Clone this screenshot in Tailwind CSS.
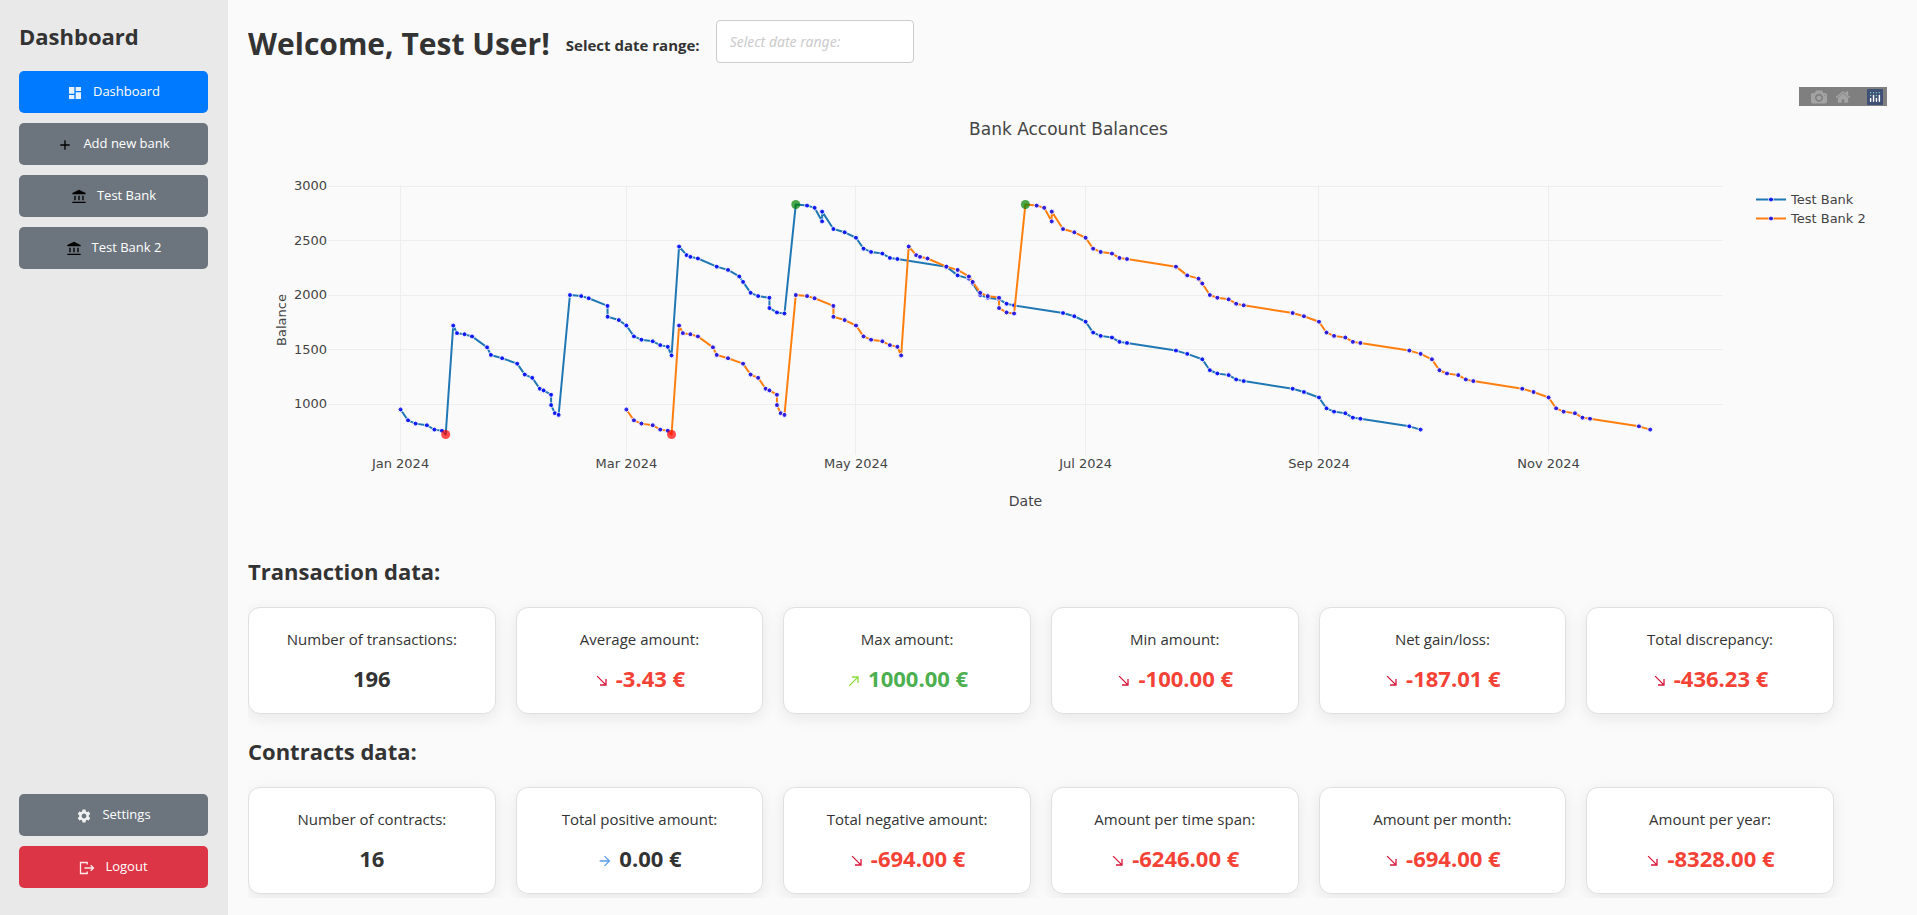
<!DOCTYPE html>
<html lang="en">
<head>
<meta charset="utf-8">
<meta name="viewport" content="width=device-width, initial-scale=1">
<title>Dashboard</title>
<script src="https://cdn.jsdelivr.net/npm/@tailwindcss/browser@4"></script>
</head>
<body class="bg-[#fafafa] text-[#333] font-['Open_Sans','Noto_Sans',sans-serif]">

<svg class="hidden" aria-hidden="true">
  <symbol id="i-bank" viewBox="0 -960 960 960"><path d="M200-280v-280h80v280h-80Zm240 0v-280h80v280h-80ZM80-120v-80h800v80H80Zm600-160v-280h80v280h-80ZM80-640v-80l400-200 400 200v80H80Z"/></symbol>
  <symbol id="i-down" viewBox="0 0 24 24"><path d="M19 9h-2v6.59L5.41 4 4 5.41 15.59 17H9v2h10z"/></symbol>
  <symbol id="i-up" viewBox="0 0 24 24"><path d="M9 5v2h6.59L4 18.59 5.41 20 17 8.41V15h2V5z"/></symbol>
  <symbol id="i-flat" viewBox="0 0 24 24"><path d="M12 4l-1.41 1.41L16.17 11H4v2h12.17l-5.58 5.59L12 20l8-8z"/></symbol>
</svg>

<div class="flex min-h-screen">
  <aside class="flex w-[228px] shrink-0 flex-col bg-[#e9e9e9] pt-5 pr-5 pb-[27px] pl-[19px]">
    <h2 class="text-[22px] leading-8 font-bold">Dashboard</h2>
    <nav class="mt-[19px] flex flex-col gap-[10px] text-[13px] text-white">
      <button type="button" class="flex h-[42px] items-center justify-center gap-[10px] rounded-[5px] bg-[#007bff]">
        <svg class="mt-0.5 size-4 fill-white/90" viewBox="0 0 24 24"><path d="M3 13h8V3H3v10zm0 8h8v-6H3v6zm10 0h8V11h-8v10zm0-18v6h8V3h-8z"/></svg>Dashboard
      </button>
      <button type="button" class="flex h-[42px] items-center justify-center gap-[10px] rounded-[5px] bg-[#6c757d]">
        <svg class="mt-0.5 size-4 fill-black" viewBox="0 0 24 24"><path d="M19 13h-6v6h-2v-6H5v-2h6V5h2v6h6v2z"/></svg>Add new bank
      </button>
      <button type="button" class="flex h-[42px] items-center justify-center gap-[10px] rounded-[5px] bg-[#6c757d]">
        <svg class="mt-0.5 size-4 fill-black"><use href="#i-bank"/></svg>Test Bank
      </button>
      <button type="button" class="flex h-[42px] items-center justify-center gap-[10px] rounded-[5px] bg-[#6c757d]">
        <svg class="mt-0.5 size-4 fill-black"><use href="#i-bank"/></svg>Test Bank 2
      </button>
    </nav>
    <div class="mt-auto flex flex-col gap-[10px] text-[13px] text-white">
      <button type="button" class="flex h-[42px] items-center justify-center gap-[10px] rounded-[5px] bg-[#6c757d]">
        <svg class="mt-0.5 size-4 fill-white/90" viewBox="0 0 24 24"><path d="M19.14 12.94c.04-.3.06-.61.06-.94 0-.32-.02-.64-.07-.94l2.03-1.58c.18-.14.23-.41.12-.61l-1.92-3.32c-.12-.22-.37-.29-.59-.22l-2.39.96c-.5-.38-1.03-.7-1.62-.94l-.36-2.54c-.04-.24-.24-.41-.48-.41h-3.84c-.24 0-.43.17-.47.41l-.36 2.54c-.59.24-1.13.57-1.62.94l-2.39-.96c-.22-.08-.47 0-.59.22L2.74 8.87c-.12.21-.08.47.12.61l2.03 1.58c-.05.3-.09.63-.09.94s.02.64.07.94l-2.03 1.58c-.18.14-.23.41-.12.61l1.92 3.32c.12.22.37.29.59.22l2.39-.96c.5.38 1.03.7 1.62.94l.36 2.54c.05.24.24.41.48.41h3.84c.24 0 .44-.17.47-.41l.36-2.54c.59-.24 1.13-.56 1.62-.94l2.39.96c.22.08.47 0 .59-.22l1.92-3.32c.12-.22.07-.47-.12-.61l-2.01-1.58zM12 15.6c-1.98 0-3.6-1.62-3.6-3.6s1.62-3.6 3.6-3.6 3.6 1.62 3.6 3.6-1.62 3.6-3.6 3.6z"/></svg>Settings
      </button>
      <button type="button" class="flex h-[42px] items-center justify-center gap-[10px] rounded-[5px] bg-[#dc3545]">
        <svg class="mt-0.5 size-4 fill-none stroke-white/90" stroke-width="1.3" viewBox="0 0 16 16"><path d="M8.2 4.6V2.5H1.5v11h6.7v-2.1M5.4 8h9M11.7 5.2 14.5 8l-2.8 2.8"/></svg>Logout
      </button>
    </div>
  </aside>

  <main class="min-w-0 flex-1 pr-[18px] pl-5">
    <div class="overflow-hidden pt-5 pb-1">
      <header class="flex items-center">
        <h1 class="mt-0.5 -mb-0.5 text-[30px] leading-[43px] font-bold">Welcome, Test User!</h1>
        <label for="range" class="mt-2 ml-4 text-[15px] font-bold">Select date range:</label>
        <input id="range" type="text" placeholder="Select date range:" class="ml-4 h-[43px] w-[198px] rounded-[4px] border border-[#ccc] bg-white px-[13px] font-['Noto_Sans',sans-serif] text-sm italic placeholder:text-[#ccc]">
      </header>

      <div class="relative mt-[22px] mr-[10px] h-[450px]">
        <svg id="chart" class="block h-full w-full font-['DejaVu_Sans',Verdana,sans-serif] text-[13px]" role="img" aria-label="Bank Account Balances"></svg>
        <div class="absolute top-0.5 right-0.5 flex h-[19px] w-[88px] items-center bg-[#7f7f7f] pr-1 pl-3">
          <button type="button" aria-label="Download plot as a png" class="mr-2"><svg class="size-4 fill-[#a3a3a3]" viewBox="0 0 1000 1000"><path transform="matrix(1 0 0 -1 0 850)" d="m500 450c-83 0-150-67-150-150 0-83 67-150 150-150 83 0 150 67 150 150 0 83-67 150-150 150z m400 150h-120c-16 0-34 13-39 29l-31 93c-6 15-23 28-40 28h-340c-16 0-34-13-39-28l-31-94c-6-15-23-28-40-28h-120c-55 0-100-45-100-100v-450c0-55 45-100 100-100h800c55 0 100 45 100 100v450c0 55-45 100-100 100z m-400-550c-138 0-250 112-250 250 0 138 112 250 250 250 138 0 250-112 250-250 0-138-112-250-250-250z m365 380c-19 0-35 16-35 35 0 19 16 35 35 35 19 0 35-16 35-35 0-19-16-35-35-35z"/></svg></button>
          <button type="button" aria-label="Reset axes"><svg class="size-4 fill-[#a3a3a3]" viewBox="0 0 929 1000"><path transform="matrix(1 0 0 -1 0 850)" d="m786 296v-267q0-15-11-26t-25-10h-214v214h-143v-214h-214q-15 0-25 10t-11 26v267q0 1 0 2t0 2l321 264 321-264q1-1 1-4z m124 39l-34-41q-5-5-12-6h-2q-7 0-12 3l-386 322-386-322q-7-4-13-4-7 2-12 7l-35 41q-4 5-3 13t6 12l401 334q18 15 42 15t43-15l136-114v109q0 8 5 13t13 5h107q8 0 13-5t5-13v-227l122-102q5-5 6-12t-4-13z"/></svg></button>
          <a href="#" aria-label="Produced with Plotly" class="ml-auto"><svg class="size-4" viewBox="0 0 132 132"><rect width="132" height="132" rx="6" fill="#3f4f75"/><g fill="#80cfbe"><circle cx="78" cy="54" r="6"/><circle cx="102" cy="30" r="6"/><circle cx="78" cy="30" r="6"/><circle cx="54" cy="30" r="6"/><circle cx="30" cy="30" r="6"/><circle cx="30" cy="54" r="6"/></g><g fill="#fff"><path d="M30 72a6 6 0 0 0-6 6v24a6 6 0 0 0 12 0V78a6 6 0 0 0-6-6zM78 72a6 6 0 0 0-6 6v24a6 6 0 0 0 12 0V78a6 6 0 0 0-6-6zM54 48a6 6 0 0 0-6 6v48a6 6 0 0 0 12 0V54a6 6 0 0 0-6-6zM102 48a6 6 0 0 0-6 6v48a6 6 0 0 0 12 0V54a6 6 0 0 0-6-6z"/></g></svg></a>
        </div>
      </div>

      <section class="mt-5">
        <h2 class="mb-5 text-[22px] leading-8 font-bold">Transaction data:</h2>
        <div class="flex gap-5 text-center">
          <article class="w-[15%] rounded-[12px] border border-[#e0e0e0] bg-white py-[19px] shadow-[0_4px_15px_rgba(0,0,0,0.08)]">
            <h3 class="text-[15px] leading-6">Number of transactions:</h3>
            <p class="mt-3 text-[22px] leading-[31px] font-bold">196</p>
          </article>
          <article class="w-[15%] rounded-[12px] border border-[#e0e0e0] bg-white py-[19px] shadow-[0_4px_15px_rgba(0,0,0,0.08)]">
            <h3 class="text-[15px] leading-6">Average amount:</h3>
            <p class="mt-3 flex items-center justify-center gap-1.5 text-[22px] leading-[31px] font-bold text-[#f44336]"><svg class="mt-1 size-4 fill-[#d8173a]"><use href="#i-down"/></svg>-3.43 €</p>
          </article>
          <article class="w-[15%] rounded-[12px] border border-[#e0e0e0] bg-white py-[19px] shadow-[0_4px_15px_rgba(0,0,0,0.08)]">
            <h3 class="text-[15px] leading-6">Max amount:</h3>
            <p class="mt-3 flex items-center justify-center gap-1.5 text-[22px] leading-[31px] font-bold text-[#4caf50]"><svg class="mt-1 size-4 fill-[#8ddb3c]"><use href="#i-up"/></svg>1000.00 €</p>
          </article>
          <article class="w-[15%] rounded-[12px] border border-[#e0e0e0] bg-white py-[19px] shadow-[0_4px_15px_rgba(0,0,0,0.08)]">
            <h3 class="text-[15px] leading-6">Min amount:</h3>
            <p class="mt-3 flex items-center justify-center gap-1.5 text-[22px] leading-[31px] font-bold text-[#f44336]"><svg class="mt-1 size-4 fill-[#d8173a]"><use href="#i-down"/></svg>-100.00 €</p>
          </article>
          <article class="w-[15%] rounded-[12px] border border-[#e0e0e0] bg-white py-[19px] shadow-[0_4px_15px_rgba(0,0,0,0.08)]">
            <h3 class="text-[15px] leading-6">Net gain/loss:</h3>
            <p class="mt-3 flex items-center justify-center gap-1.5 text-[22px] leading-[31px] font-bold text-[#f44336]"><svg class="mt-1 size-4 fill-[#d8173a]"><use href="#i-down"/></svg>-187.01 €</p>
          </article>
          <article class="w-[15%] rounded-[12px] border border-[#e0e0e0] bg-white py-[19px] shadow-[0_4px_15px_rgba(0,0,0,0.08)]">
            <h3 class="text-[15px] leading-6">Total discrepancy:</h3>
            <p class="mt-3 flex items-center justify-center gap-1.5 text-[22px] leading-[31px] font-bold text-[#f44336]"><svg class="mt-1 size-4 fill-[#d8173a]"><use href="#i-down"/></svg>-436.23 €</p>
          </article>
        </div>
      </section>

      <section class="mt-[21px]">
        <h2 class="mb-5 text-[22px] leading-8 font-bold">Contracts data:</h2>
        <div class="flex gap-5 text-center">
          <article class="w-[15%] rounded-[12px] border border-[#e0e0e0] bg-white py-[19px] shadow-[0_4px_15px_rgba(0,0,0,0.08)]">
            <h3 class="text-[15px] leading-6">Number of contracts:</h3>
            <p class="mt-3 text-[22px] leading-[31px] font-bold">16</p>
          </article>
          <article class="w-[15%] rounded-[12px] border border-[#e0e0e0] bg-white py-[19px] shadow-[0_4px_15px_rgba(0,0,0,0.08)]">
            <h3 class="text-[15px] leading-6">Total positive amount:</h3>
            <p class="mt-3 flex items-center justify-center gap-1.5 text-[22px] leading-[31px] font-bold"><svg class="mt-1 size-4 fill-[#5a9cee]"><use href="#i-flat"/></svg>0.00 €</p>
          </article>
          <article class="w-[15%] rounded-[12px] border border-[#e0e0e0] bg-white py-[19px] shadow-[0_4px_15px_rgba(0,0,0,0.08)]">
            <h3 class="text-[15px] leading-6">Total negative amount:</h3>
            <p class="mt-3 flex items-center justify-center gap-1.5 text-[22px] leading-[31px] font-bold text-[#f44336]"><svg class="mt-1 size-4 fill-[#d8173a]"><use href="#i-down"/></svg>-694.00 €</p>
          </article>
          <article class="w-[15%] rounded-[12px] border border-[#e0e0e0] bg-white py-[19px] shadow-[0_4px_15px_rgba(0,0,0,0.08)]">
            <h3 class="text-[15px] leading-6">Amount per time span:</h3>
            <p class="mt-3 flex items-center justify-center gap-1.5 text-[22px] leading-[31px] font-bold text-[#f44336]"><svg class="mt-1 size-4 fill-[#d8173a]"><use href="#i-down"/></svg>-6246.00 €</p>
          </article>
          <article class="w-[15%] rounded-[12px] border border-[#e0e0e0] bg-white py-[19px] shadow-[0_4px_15px_rgba(0,0,0,0.08)]">
            <h3 class="text-[15px] leading-6">Amount per month:</h3>
            <p class="mt-3 flex items-center justify-center gap-1.5 text-[22px] leading-[31px] font-bold text-[#f44336]"><svg class="mt-1 size-4 fill-[#d8173a]"><use href="#i-down"/></svg>-694.00 €</p>
          </article>
          <article class="w-[15%] rounded-[12px] border border-[#e0e0e0] bg-white py-[19px] shadow-[0_4px_15px_rgba(0,0,0,0.08)]">
            <h3 class="text-[15px] leading-6">Amount per year:</h3>
            <p class="mt-3 flex items-center justify-center gap-1.5 text-[22px] leading-[31px] font-bold text-[#f44336]"><svg class="mt-1 size-4 fill-[#d8173a]"><use href="#i-down"/></svg>-8328.00 €</p>
          </article>
        </div>
      </section>
    </div>
  </main>
</div>

<script>
// Balance history of the first account: [day of the year 2024, balance]
const bank1 = [[0,950],[2,850],[4,820],[7,805],[9,765],[11,755],[12,720],[14,1720],[15,1650],[17,1640],[19,1620],[23,1520],[24,1450],[27,1420],[31,1370],[33,1270],[35,1240],[37,1140],[38,1125],[40,1085],[40,990],[41,915],[42,900],[45,2000],[48,1990],[50,1970],[55,1900],[55,1800],[58,1770],[60,1720],[62,1620],[64,1590],[67,1575],[69,1540],[71,1525],[72,1445],[74,2445],[76,2365],[77,2350],[79,2335],[84,2260],[87,2230],[90,2170],[91,2120],[93,2020],[95,1990],[98,1975],[98,1880],[100,1840],[102,1830],[105,2830],[108,2820],[110,2800],[112,2675],[112,2765],[115,2605],[118,2575],[121,2525],[123,2425],[125,2395],[128,2380],[130,2340],[132,2330],[145,2260],[148,2180],[151,2150],[152,2105],[154,2000],[156,1975],[159,1960],[161,1920],[163,1905],[176,1835],[179,1805],[182,1755],[184,1655],[186,1625],[189,1610],[191,1570],[193,1560],[206,1490],[209,1460],[213,1410],[215,1310],[217,1280],[220,1265],[222,1225],[224,1210],[237,1140],[240,1110],[244,1060],[246,960],[248,930],[251,915],[253,875],[255,865],[268,795],[271,765]];

// The second account has the same bookings two calendar months later
const monthShift = d => d < 60 ? 60 : d < 182 ? 61 : d < 213 ? 62 : 61;
const bank2 = bank1.map(([d, v]) => [d + monthShift(d), v]);

const months = [[0,'Jan 2024'],[60,'Mar 2024'],[121,'May 2024'],[182,'Jul 2024'],[244,'Sep 2024'],[305,'Nov 2024']];

const svg = document.getElementById('chart');

function draw() {
  const W = svg.getBoundingClientRect().width, left = 80, right = W - 166, top = 100, bottom = 370;
  const X = d => left + (d + 19.27) * (right - left) / 370.6;
  const Y = v => 319 - (v - 1000) * 0.109;
  let s = '';
  for (const [d, name] of months) {
    s += `<path class="stroke-[#eee]" shape-rendering="crispEdges" d="M${X(d)} ${top}V${bottom}"/>`;
    s += `<text class="fill-[#444]" text-anchor="middle" x="${X(d)}" y="383">${name}</text>`;
  }
  for (const v of [1000, 1500, 2000, 2500, 3000]) {
    s += `<path class="stroke-[#eee]" shape-rendering="crispEdges" d="M${left} ${Y(v)}H${right}"/>`;
    s += `<text class="fill-[#444]" text-anchor="end" x="${left - 1}" y="${Y(v) + 4}">${v}</text>`;
  }
  const dot = (x, y) => `<circle class="fill-[#00f] stroke-white opacity-80" cx="${x}" cy="${y}" r="2.5"/>`;
  const series = (data, color) => {
    const max = Math.max(...data.map(p => p[1])), min = Math.min(...data.map(p => p[1]));
    const marks = data.map(([d, v]) =>
      v === max ? `<circle class="fill-[green] opacity-70" cx="${X(d)}" cy="${Y(v)}" r="4.5"/>` :
      v === min ? `<circle class="fill-[red] opacity-70" cx="${X(d)}" cy="${Y(v)}" r="4.5"/>` :
      dot(X(d), Y(v)));
    return `<polyline fill="none" stroke="${color}" stroke-width="2" stroke-linejoin="round" points="${data.map(([d, v]) => X(d) + ',' + Y(v)).join(' ')}"/>` + marks.join('');
  };
  s += series(bank1, '#1f77b4') + series(bank2, '#ff7f0e');
  [['Test Bank', '#1f77b4'], ['Test Bank 2', '#ff7f0e']].forEach(([name, color], i) => {
    const x = right + 33, y = 114.5 + 19 * i;
    s += `<path stroke="${color}" stroke-width="2" d="M${x} ${y}h30"/>` + dot(x + 15, y);
    s += `<text class="fill-[#444]" x="${x + 35}" y="${y + 4}">${name}</text>`;
  });
  s += `<text class="fill-[#444] text-[17px]" text-anchor="middle" x="${W / 2}" y="50">Bank Account Balances</text>`;
  s += `<text class="fill-[#444] text-[14px]" text-anchor="middle" x="${(left + right) / 2}" y="421">Date</text>`;
  s += `<text class="fill-[#444]" text-anchor="middle" transform="translate(38 235) rotate(-90)">Balance</text>`;
  svg.innerHTML = s;
}
new ResizeObserver(draw).observe(svg.parentElement);
</script>
</body>
</html>
